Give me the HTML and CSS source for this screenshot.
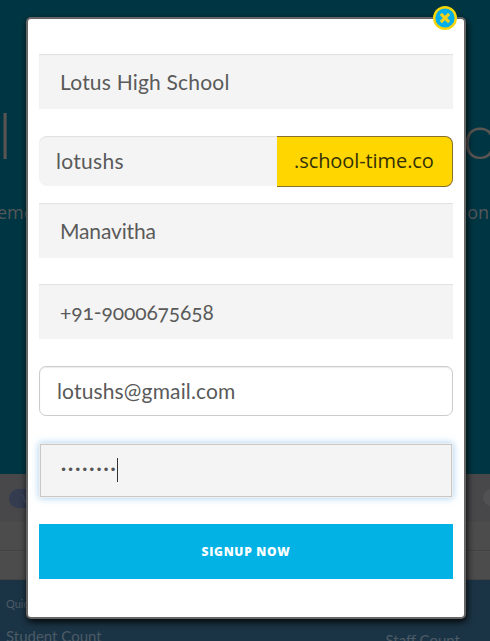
FILE: index.html
```html
<!DOCTYPE html>
<html lang="en">
<head>
  <meta charset="UTF-8" />
  <meta name="viewport" content="width=device-width, initial-scale=1.0" />
  <title>School Time - Signup</title>
  <link rel="stylesheet" href="styles.css">
</head>
<body>
  <!-- Page behind the popup -->
  <div class="page">
    <section class="hero">
      <div class="hero-title"><span>l</span><span>o</span></div>
      <div class="hero-text"><span>eme</span><span>on</span></div>
    </section>
    <section class="toolbar">
      <span class="pill">W</span>
      <span class="dot"></span>
    </section>
    <section class="rows">
      <div class="row"></div>
      <div class="row"></div>
    </section>
    <section class="stats">
      <p class="stats-title">Quick</p>
      <div class="stats-labels"><span>Student Count</span><span class="staff">Staff Count</span></div>
    </section>
  </div>

  <!-- Signup popup -->
  <div class="modal">
    <button class="close-button" type="button" aria-label="Close">
      <svg width="24" height="24" viewBox="0 0 24 24">
        <circle cx="12" cy="12" r="10.8" fill="#00aeea" stroke="#f5d50a" stroke-width="2.4"/>
        <path d="M8.9 8.9l6.2 6.2M15.1 8.9l-6.2 6.2" stroke="#f0d21c" stroke-width="3" stroke-linecap="square"/>
      </svg>
    </button>
    <form class="signup-form">
      <input class="field school" type="text" value="Lotus High School">
      <div class="domain">
        <input class="domain-name" type="text" value="lotushs">
        <span class="domain-suffix">.school-time.co</span>
      </div>
      <input class="field person" type="text" value="Manavitha">
      <input class="field phone" type="text" value="+91-9000675658">
      <input class="email" type="text" value="lotushs@gmail.com">
      <div class="password"><span class="bullets">••••••••</span><span class="caret"></span></div>
      <button class="signup-button" type="button">SIGNUP NOW</button>
    </form>
  </div>
</body>
</html>
```
FILE: styles.css
```css
* {
  box-sizing: border-box;
}
body {
  margin: 0;
  height: 641px;
  overflow: hidden;
  position: relative;
  font-family: Lato, "Open Sans", sans-serif;
  background-color: #003643;
}

/* Dimmed page */
.page {
  height: 641px;
  overflow: hidden;
  color: #56575a;
}
.hero {
  height: 474px;
  padding-top: 90px;
  background-color: #003643;
}
.hero-title {
  display: flex;
  justify-content: space-between;
  margin-left: -2px;
  margin-right: -8px;
  font-size: 64px;
  font-weight: 300;
  line-height: 90px;
  color: #5a5553;
}
.hero-text {
  display: flex;
  justify-content: space-between;
  margin-left: -3px;
  padding-top: 19px;
  padding-right: 1px;
  font: 18px/26px "Open Sans", sans-serif;
}
.toolbar {
  display: flex;
  justify-content: space-between;
  height: 48px;
  padding: 15px 0 0 9px;
  background-color: #48484b;
}
.pill {
  width: 60px;
  height: 19px;
  padding-left: 13px;
  border-radius: 10px;
  background-color: #343c50;
  color: #454d62;
  font-size: 11px;
  line-height: 19px;
}
.dot {
  width: 17px;
  height: 17px;
  margin-right: -10px;
  border-radius: 50%;
  background-color: #515153;
}
.row {
  height: 29px;
  border-bottom: 1px solid #434345;
  border-top: 1px solid #4e4e4e;
  background-color: #4c4c4c;
}
.stats {
  height: 61px;
  padding: 16px 0 0 6px;
  background-color: #1b3445;
  color: #4b5b67;
}
.stats-title {
  margin: 0;
  font-size: 11px;
  line-height: 16px;
}
.stats-labels {
  display: flex;
  justify-content: space-between;
  padding: 15px 30px 0 0;
  font-size: 15px;
  line-height: 18px;
}
.staff {
  padding-top: 4px;
}

/* Popup */
.modal {
  position: absolute;
  left: 26px;
  top: 17px;
  width: 440px;
  height: 602px;
  padding: 35px 11px 0;
  border: 2px solid #666;
  border-radius: 5px;
  background-color: #fff;
  box-shadow: 1px 3px 7px rgba(0, 0, 0, 0.9);
}
.close-button {
  position: absolute;
  top: -13px;
  right: 7px;
  width: 24px;
  height: 24px;
  padding: 0;
  border: 0;
  background: none;
}
.close-button svg {
  display: block;
}
.signup-form {
  display: flex;
  flex-direction: column;
}
input {
  font-family: inherit;
  font-size: 21px;
  color: #5a5a5a;
  outline: none;
}
.field {
  height: 55px;
  padding: 0 21px 1px;
  border: 0;
  background-color: #f4f4f4;
  box-shadow: inset 0 1px 1px rgba(0, 0, 0, 0.08);
}
.school {
  letter-spacing: 0.2px;
}
.domain {
  display: flex;
  height: 51px;
  margin: 27px 0 16px;
}
.domain-name {
  width: 238px;
  height: 50px;
  padding: 0 17px 2px;
  border: 0;
  border-radius: 8px 0 0 8px;
  background-color: #f4f4f4;
  box-shadow: inset 0 1px 1px rgba(0, 0, 0, 0.08);
  letter-spacing: 0.3px;
}
.domain-suffix {
  flex: 1;
  padding-left: 17px;
  border: 1px solid #876f2c;
  border-left: 0;
  border-radius: 0 8px 8px 0;
  background-color: #ffd600;
  color: #333005;
  font: 20px/48px "Open Sans", sans-serif;
  letter-spacing: -0.08px;
  white-space: nowrap;
}
.person {
  letter-spacing: -0.15px;
}
.phone {
  margin-top: 26px;
  font-variant-numeric: oldstyle-nums;
  letter-spacing: -0.1px;
}
.email {
  height: 50px;
  margin-top: 27px;
  padding: 0 17px 2px;
  border: 1px solid #ccc;
  border-radius: 7px;
  box-shadow: inset 0 1px 1px rgba(0, 0, 0, 0.08);
  letter-spacing: 0.15px;
}
.password {
  display: flex;
  align-items: center;
  height: 53px;
  margin: 28px 1px 27px;
  padding: 0 0 2px 19px;
  border: 1px solid #c8c8c8;
  background-color: #f4f4f4;
  box-shadow: 0 0 0 1px #eee, 0 0 7px 1px rgba(102, 175, 233, 0.6);
  color: #555;
}
.bullets {
  width: 57px;
  font: 12px/20px "DejaVu Sans", sans-serif;
  white-space: nowrap;
}
.caret {
  width: 1px;
  height: 24px;
  background-color: #333;
}
.signup-button {
  height: 55px;
  padding: 0;
  border: 0;
  background-color: #02b2e4;
  color: #fff;
  font-family: "Open Sans", sans-serif;
  font-size: 12px;
  font-weight: 800;
  letter-spacing: 0.7px;
}
```
